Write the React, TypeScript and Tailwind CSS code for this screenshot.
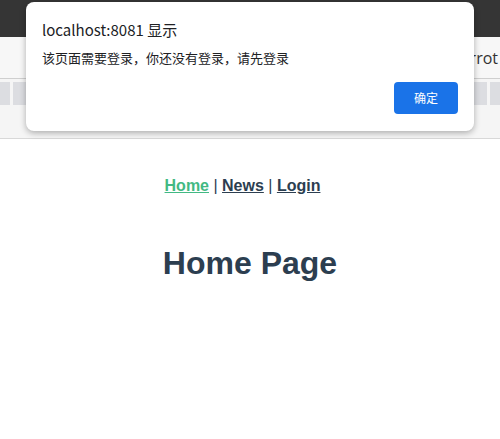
import React from "react";

export default function App() {
  return (
    <div className="relative w-[500px] h-[439px] overflow-hidden bg-white" style={{ fontFamily: "Arial, 'Liberation Sans', sans-serif" }}>
      {/* browser chrome */}
      <div className="h-[37px] bg-[#353535]" />
      <div className="h-[41px] bg-[#f7f7f7] flex items-center justify-end overflow-hidden">
        <span className="mr-[2px] text-[16px] text-[#333] whitespace-nowrap" style={{ fontFamily: "'Open Sans', sans-serif" }}>Carrot</span>
      </div>
      <div className="h-px bg-[#cfcfcf]" />
      <div className="h-[3px] bg-[#f5f5f5]" />
      <div className="h-[23px] bg-[#dcdde1] flex">
        <div className="w-[10px]" />
        <div className="w-[3px] bg-[#f5f5f5]" />
        <div className="flex-1" />
        <div className="w-[3px] bg-[#f5f5f5]" />
        <div className="w-[10px]" />
      </div>
      <div className="h-[33px] bg-[#f5f5f5]" />
      <div className="h-px bg-[#d8d8d8]" />

      {/* page */}
      <div className="pt-[35px] text-center text-[#2c3e50]" style={{ fontFamily: "'Liberation Sans', Arial, sans-serif" }}>
        <div className="text-[16px] leading-[24px] pr-[15px]">
          <a className="font-bold underline text-[#42b983]">Home</a>
          <span> | </span>
          <a className="font-bold underline">News</a>
          <span> | </span>
          <a className="font-bold underline">Login</a>
        </div>
        <h1 className="mt-[47px] text-[32px] leading-[37px] font-bold">Home Page</h1>
      </div>

      {/* alert dialog */}
      <div
        className="absolute left-[26px] top-[2px] w-[448px] h-[129px] bg-white rounded-[8px] shadow-[0_2px_6px_rgba(0,0,0,0.3)] flex flex-col pl-[16px] pr-[16px]"
        style={{ fontFamily: "'Noto Sans CJK SC', sans-serif" }}
      >
        <div className="mt-[17px] text-[15px] leading-[22px] text-[#202124]">localhost:8081 显示</div>
        <div className="mt-[8px] text-[13px] leading-[18px] text-[#202124]">该页面需要登录，你还没有登录，请先登录</div>
        <div className="flex justify-end mt-[15px]">
          <button className="w-[64px] h-[32px] rounded-[4px] bg-[#1a73e8] text-white text-[12px] leading-none">确定</button>
        </div>
      </div>
    </div>
  );
}
